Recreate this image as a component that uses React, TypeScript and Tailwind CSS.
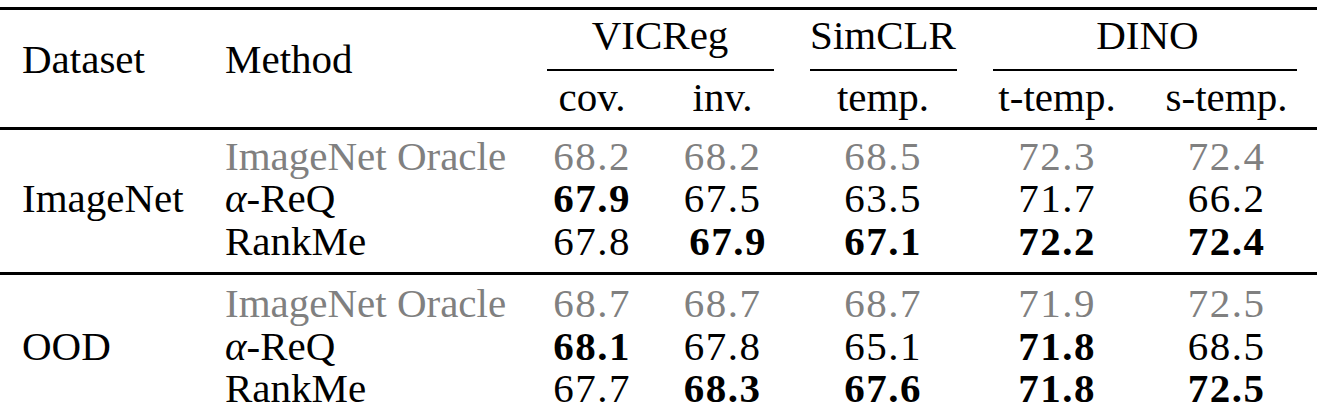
import React from "react";

const cols = "grid grid-cols-[205px_322px_130px_131px_190px_158px_181px]";

type Cell = { v: string; b?: boolean; cls?: string };
type Row = { method: React.ReactNode; gray?: boolean; cells: Cell[] };

const AlphaReQ = () => (
  <span>
    <span className="italic">α</span>-ReQ
  </span>
);

const groups: { name: string; rows: Row[] }[] = [
  {
    name: "ImageNet",
    rows: [
      {
        method: "ImageNet Oracle",
        gray: true,
        cells: [{ v: "68.2" }, { v: "68.2" }, { v: "68.5" }, { v: "72.3" }, { v: "72.4" }],
      },
      {
        method: <AlphaReQ />,
        cells: [{ v: "67.9", b: true }, { v: "67.5" }, { v: "63.5" }, { v: "71.7" }, { v: "66.2" }],
      },
      {
        method: "RankMe",
        cells: [
          { v: "67.8" },
          { v: "67.9", b: true, cls: "pl-[11px]" },
          { v: "67.1", b: true },
          { v: "72.2", b: true },
          { v: "72.4", b: true },
        ],
      },
    ],
  },
  {
    name: "OOD",
    rows: [
      {
        method: "ImageNet Oracle",
        gray: true,
        cells: [{ v: "68.7" }, { v: "68.7" }, { v: "68.7" }, { v: "71.9" }, { v: "72.5" }],
      },
      {
        method: <AlphaReQ />,
        cells: [{ v: "68.1", b: true }, { v: "67.8" }, { v: "65.1" }, { v: "71.8", b: true }, { v: "68.5" }],
      },
      {
        method: "RankMe",
        cells: [
          { v: "67.7" },
          { v: "68.3", b: true },
          { v: "67.6", b: true },
          { v: "71.8", b: true },
          { v: "72.5", b: true },
        ],
      },
    ],
  },
];

function Group({ name, rows, top, bottom }: { name: string; rows: Row[]; top: string; bottom: string }) {
  return (
    <div className={`${cols} grid-rows-[42.5px_42.5px_42.5px] leading-[42.5px] ${top} ${bottom}`}>
      <div className="col-start-1 row-start-2 pl-[22px] whitespace-nowrap">{name}</div>
      {rows.map((r, i) => (
        <React.Fragment key={i}>
          <div
            className={`col-start-2 whitespace-nowrap pl-[20px] ${r.gray ? "text-[#808080]" : "text-black"}`}
            style={{ gridRowStart: i + 1 }}
          >
            {r.method}
          </div>
          {r.cells.map((c, j) => (
            <div
              key={j}
              className={`text-center whitespace-nowrap tracking-[1.5px] ${c.b ? "font-bold" : ""} ${
                r.gray ? "text-[#808080]" : "text-black"
              } ${c.cls ?? ""}`}
              style={{ gridRowStart: i + 1, gridColumnStart: j + 3 }}
            >
              {c.v}
            </div>
          ))}
        </React.Fragment>
      ))}
    </div>
  );
}

export default function App() {
  return (
    <div
      className="w-[1324px] h-[419px] overflow-hidden bg-white text-black pt-[7px] text-[41px]"
      style={{ fontFamily: '"Liberation Serif", "Times New Roman", serif' }}
    >
      <div className="w-[1317px]">
        <div className="h-[3px] bg-black" />
        {/* header */}
        <div className={`${cols} grid-rows-[60.5px_56.5px]`}>
          <div className="row-span-2 col-start-1 row-start-1 pl-[22px] pt-[29px] leading-[40px]">Dataset</div>
          <div className="row-span-2 col-start-2 row-start-1 pl-[20px] pt-[29px] leading-[40px]">Method</div>
          <div className="col-start-3 col-span-2 row-start-1 pt-[4.5px]">
            <div className="h-[40px] leading-[40px] text-center pl-[5px]">VICReg</div>
            <div className="mt-[14.5px] ml-[20px] mr-[14px] h-[1.5px] bg-black" />
          </div>
          <div className="col-start-5 row-start-1 pt-[4.5px]">
            <div className="h-[40px] leading-[40px] text-center">SimCLR</div>
            <div className="mt-[14.5px] ml-[22px] mr-[21px] h-[1.5px] bg-black" />
          </div>
          <div className="col-start-6 col-span-2 row-start-1 pt-[4.5px]">
            <div className="h-[40px] leading-[40px] text-center">DINO</div>
            <div className="mt-[14.5px] ml-[15px] mr-[20px] h-[1.5px] bg-black" />
          </div>
          <div className="col-start-3 row-start-2 pt-[6px] leading-[40px] text-center">cov.</div>
          <div className="col-start-4 row-start-2 pt-[6px] leading-[40px] text-center">inv.</div>
          <div className="col-start-5 row-start-2 pt-[6px] leading-[40px] text-center">temp.</div>
          <div className="col-start-6 row-start-2 pt-[6px] leading-[40px] text-center">t-temp.</div>
          <div className="col-start-7 row-start-2 pt-[6px] leading-[40px] text-center">s-temp.</div>
        </div>
        <div className="h-[3px] bg-black" />
        <Group name={groups[0].name} rows={groups[0].rows} top="pt-[4.8px]" bottom="pb-[9.7px]" />
        <div className="h-[3px] bg-black" />
        <Group name={groups[1].name} rows={groups[1].rows} top="pt-[7.5px]" bottom="pb-0" />
      </div>
    </div>
  );
}
